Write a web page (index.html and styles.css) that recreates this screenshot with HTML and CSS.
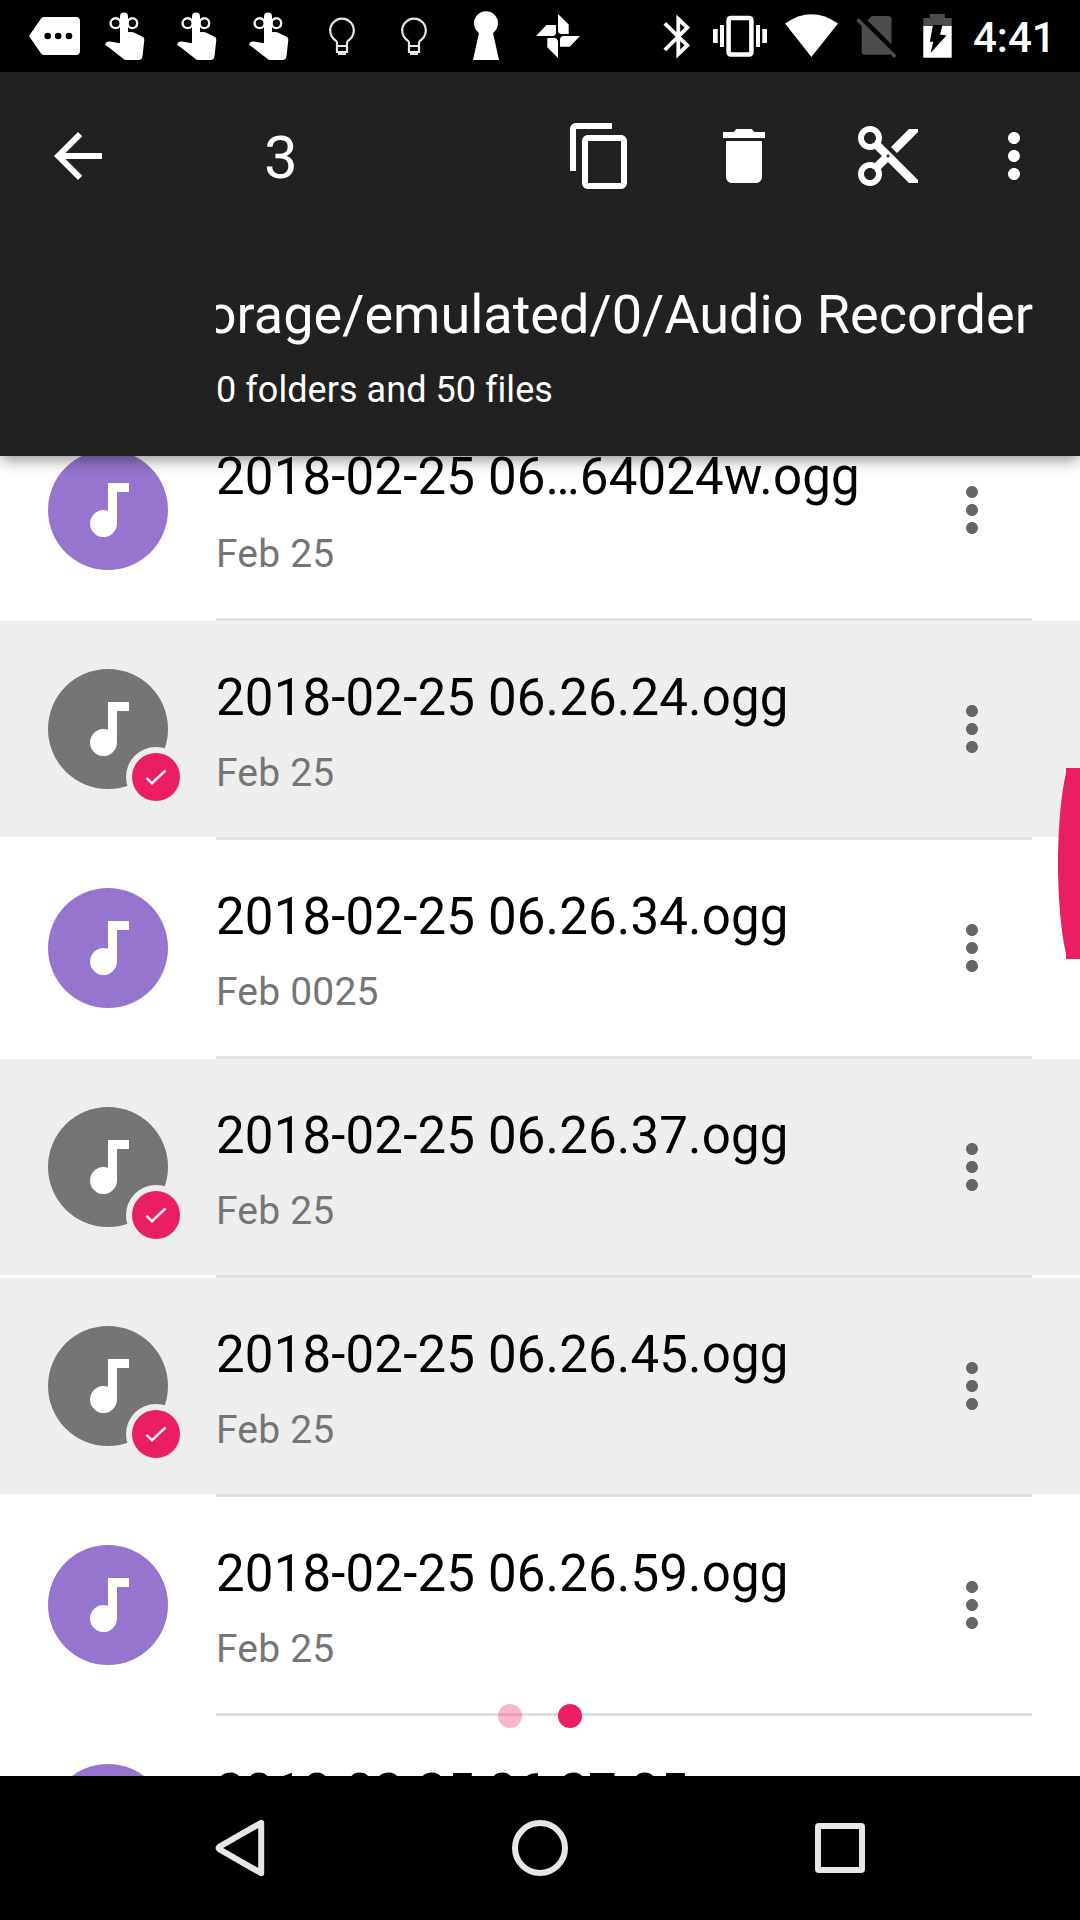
FILE: index.html
```html
<!DOCTYPE html>
<html lang="en">
<head>
<meta charset="utf-8">
<title>Audio Recorder</title>
<link rel="stylesheet" href="styles.css">
</head>
<body>
<svg class="defs" width="0" height="0">
  <symbol id="reminder" viewBox="90 0 72 72">
    <g fill="none" stroke="#fff" stroke-width="2.4"><ellipse cx="115.6" cy="23.2" rx="5" ry="4.9"/><ellipse cx="132.4" cy="23.2" rx="4.8" ry="4.9"/></g>
    <path fill="#fff" d="M120 16.5a4 4 0 0 1 8 0V32h3q2 0 4 1l8 4q1.400 1 1.300 3l-1.800 16q-.5 4-4 4h-12q-2 0-3.500-1.500L105 44.500q1-3.500 5-3l10 1.700z"/>
  </symbol>
  <symbol id="bulb" viewBox="306 0 72 72">
    <path fill="none" stroke="#e4e8e6" stroke-width="2.200" d="M337 52V43q0-2-2-3a11.800 11.800 0 1 1 14 0q-2 1-2 3v9zM337 46h10"/>
    <path fill="#e4e8e6" d="M338 51h8v4h-8z"/>
  </symbol>
  <symbol id="dots" viewBox="0 0 24 24"><path fill="currentColor" d="M12 8c1.100 0 2-.9 2-2s-.9-2-2-2-2 .9-2 2 .9 2 2 2zm0 2c-1.100 0-2 .9-2 2s.9 2 2 2 2-.9 2-2-.9-2-2-2zm0 6c-1.100 0-2 .9-2 2s.9 2 2 2 2-.9 2-2-.9-2-2-2z"/></symbol>
  <symbol id="note" viewBox="0 0 120 120"><path fill="#fff" d="M60 33h21v9H69v31.500A13.500 13.500 0 1 1 60 60.800z"/></symbol>
  <symbol id="check" viewBox="-24 -24 48 48"><path fill="none" stroke="#fff" stroke-opacity=".92" stroke-width="2.500" d="M-9.500 .8L-4 6.200L9.600-6.700"/></symbol>
</svg>

<div class="screen">
  <div class="status">
    <div class="notifications">
      <svg width="72" height="72" viewBox="18 0 72 72"><path fill="#fff" d="M44 17H76a4 4 0 0 1 4 4V51a4 4 0 0 1-4 4H44q-2 0-3.300-2L29 36L40.700 19q1.300-2 3.300-2z"/><g fill="#000"><circle cx="47.700" cy="36" r="3.300"/><circle cx="58.200" cy="36" r="3.300"/><circle cx="69" cy="36" r="3.300"/></g></svg>
      <svg width="72" height="72"><use href="#reminder"/></svg>
      <svg width="72" height="72"><use href="#reminder"/></svg>
      <svg width="72" height="72"><use href="#reminder"/></svg>
      <svg width="72" height="72"><use href="#bulb"/></svg>
      <svg width="72" height="72"><use href="#bulb"/></svg>
      <svg width="72" height="72" viewBox="450 0 72 72"><path fill="#fff" d="M479 33a12 12 0 1 1 14 0L499 60H473z"/></svg>
      <svg width="72" height="72" viewBox="522 0 72 72"><path fill="#fff" d="M558 14l10.700 10.500V34H561q-3-.5-3-3.500zM536 36l10.500-11H556v8q-.5 3-3.500 3zM580 36l-10.300 10.700H560V39q.5-3 3.500-3zM558 58l-10.700-10.700V38h7.400q3 .5 3.300 3.500z"/></svg>
    </div>
    <div class="system">
      <svg width="40" height="72" viewBox="660 0 40 72"><path fill="none" stroke="#fff" stroke-width="3.800" d="M664.800 23.300L687.300 45.500L678.300 54V19L687.300 27.500L664.800 50"/></svg>
      <svg width="80" height="72" viewBox="700 0 80 72"><rect x="728.600" y="18" width="22.800" height="36.500" rx="2" fill="none" stroke="#fff" stroke-width="4.500"/><path fill="#fff" d="M720 25h4v22h-4zM713 29h4.700v14H713zM756 25h4v22h-4zM762.300 29h4.700v14h-4.700z"/></svg>
      <svg width="64" height="72" viewBox="780 0 64 72"><path fill="#fff" d="M785 23.500Q811.500 5 838 23.500L811.400 57z"/></svg>
      <svg width="64" height="72" viewBox="844 0 64 72"><path fill="#4d4d4d" d="M872 16H888a3.500 3.500 0 0 1 3.500 3.500V51.200a3.500 3.500 0 0 1-3.500 3.500H865.200a3.500 3.500 0 0 1-3.500-3.500V26z"/><path stroke="#000" stroke-width="5" d="M859 15.500L900 56.300"/><path stroke="#4d4d4d" stroke-width="3.300" d="M857.500 19.500L895.300 56.700"/></svg>
      <svg width="60" height="72" viewBox="908 0 60 72"><path fill="#4d4d4d" d="M930 14h14.700v4h7v8h-28.400v-8H930z"/><path fill="#fff" d="M923.300 26h28.400v31.700h-28.400z"/><path fill="#000" d="M933 25h9.500l-2.500 9.500l6.500 1L930.500 53l2.800-11.300h-3.500z"/></svg>
      <span class="clock">4:41</span>
    </div>
  </div>

  <header class="appbar">
    <div class="toolbar">
      <svg width="72" height="72" viewBox="0 0 24 24"><path fill="#fff" d="M20 11H7.830l5.590-5.590L12 4l-8 8 8 8 1.410-1.410L7.830 13H20v-2z"/></svg>
      <span class="count">3</span>
      <div class="actions">
        <svg width="72" height="72" viewBox="0 0 24 24"><path fill="#fff" d="M16 1H4c-1.100 0-2 .9-2 2v14h2V3h12V1zm3 4H8c-1.100 0-2 .9-2 2v14c0 1.100.9 2 2 2h11c1.100 0 2-.9 2-2V7c0-1.100-.9-2-2-2zm0 16H8V7h11v14z"/></svg>
        <svg width="72" height="72" viewBox="0 0 24 24"><path fill="#fff" d="M6 19c0 1.100.9 2 2 2h8c1.100 0 2-.9 2-2V7H6v12zM19 4h-3.500l-1-1h-5l-1 1H5v2h14V4z"/></svg>
        <svg width="72" height="72" viewBox="0 0 24 24"><path fill="#fff" d="M9.640 7.640c.23-.5.360-1.050.360-1.640 0-2.210-1.790-4-4-4S2 3.790 2 6s1.790 4 4 4c.59 0 1.140-.13 1.640-.36L10 12l-2.360 2.360C7.140 14.130 6.590 14 6 14c-2.210 0-4 1.790-4 4s1.790 4 4 4 4-1.790 4-4c0-.59-.13-1.140-.36-1.640L12 14l7 7h3v-1L9.640 7.640zM6 8c-1.100 0-2-.89-2-2s.9-2 2-2 2 .89 2 2-.9 2-2 2zm0 12c-1.100 0-2-.89-2-2s.9-2 2-2 2 .89 2 2-.9 2-2 2zm6-7.500c-.28 0-.5-.22-.5-.5s.22-.5.500-.5.500.22.500.5-.22.500-.5.500zM19 3l-6 6 2 2 7-7V3h-3z"/></svg>
      </div>
      <svg class="overflow" width="72" height="72"><use href="#dots"/></svg>
    </div>
    <div class="path"><span>/storage/emulated/0/Audio Recorder</span></div>
    <div class="summary">0 folders and 50 files</div>
  </header>

  <main class="list">
    <div class="row clipped">
      <div class="avatar"><svg width="120" height="120"><use href="#note"/></svg></div>
      <div class="info"><div class="name">2018-02-25 06…64024w.ogg</div><div class="date">Feb 25</div></div>
      <svg class="menu" width="72" height="72"><use href="#dots"/></svg>
    </div>
    <div class="row selected">
      <div class="avatar"><svg width="120" height="120"><use href="#note"/></svg><svg class="badge" width="48" height="48"><use href="#check"/></svg></div>
      <div class="info"><div class="name">2018-02-25 06.26.24.ogg</div><div class="date">Feb 25</div></div>
      <svg class="menu" width="72" height="72"><use href="#dots"/></svg>
    </div>
    <div class="row">
      <div class="avatar"><svg width="120" height="120"><use href="#note"/></svg></div>
      <div class="info"><div class="name">2018-02-25 06.26.34.ogg</div><div class="date">Feb 0025</div></div>
      <svg class="menu" width="72" height="72"><use href="#dots"/></svg>
    </div>
    <div class="row selected">
      <div class="avatar"><svg width="120" height="120"><use href="#note"/></svg><svg class="badge" width="48" height="48"><use href="#check"/></svg></div>
      <div class="info"><div class="name">2018-02-25 06.26.37.ogg</div><div class="date">Feb 25</div></div>
      <svg class="menu" width="72" height="72"><use href="#dots"/></svg>
    </div>
    <div class="row selected">
      <div class="avatar"><svg width="120" height="120"><use href="#note"/></svg><svg class="badge" width="48" height="48"><use href="#check"/></svg></div>
      <div class="info"><div class="name">2018-02-25 06.26.45.ogg</div><div class="date">Feb 25</div></div>
      <svg class="menu" width="72" height="72"><use href="#dots"/></svg>
    </div>
    <div class="row">
      <div class="avatar"><svg width="120" height="120"><use href="#note"/></svg></div>
      <div class="info"><div class="name">2018-02-25 06.26.59.ogg</div><div class="date">Feb 25</div></div>
      <svg class="menu" width="72" height="72"><use href="#dots"/></svg>
    </div>
    <div class="row">
      <div class="avatar"></div>
      <div class="info"><div class="name">2018-02-25 06.27.05.ogg</div></div>
    </div>
    <svg class="scroller" width="22" height="191" viewBox="0 0 22 191"><path fill="#e91e63" d="M22 0H8V5A22 117 0 0 0 8 186V191H22z"/></svg>
    <div class="pager"><i></i><i class="current"></i></div>
  </main>

  <nav class="navbar">
    <svg width="300" height="144" viewBox="90 1776 300 144"><path d="M261.200 1822.800V1873.200L219.500 1849.300Q217.500 1848 219.500 1846.700z"/></svg>
    <svg width="300" height="144" viewBox="390 1776 300 144"><circle cx="540" cy="1848" r="25"/></svg>
    <svg width="300" height="144" viewBox="690 1776 300 144"><rect x="818" y="1826" width="44" height="44" rx="1"/></svg>
  </nav>
</div>
</body>
</html>
```
FILE: styles.css
```css
* { box-sizing: border-box; }
body { margin: 0; font-family: Roboto, sans-serif; background: #000; }
svg { display: block; flex: none; }
.defs { position: absolute; }
.screen { width: 1080px; height: 1920px; display: flex; flex-direction: column; overflow: hidden; }

.status { height: 72px; flex: none; background: #000; display: flex; justify-content: space-between; padding-left: 18px; }
.notifications { display: flex; }
.system { display: flex; width: 420px; }
.clock { color: #fff; font-size: 42px; font-weight: 500; line-height: 75px; padding-left: 5px; }

.appbar { height: 384px; flex: none; background: #212121; color: #fff; position: relative; z-index: 2; box-shadow: 0 5px 14px -1px rgba(0, 0, 0, .42); }
.toolbar { height: 168px; display: flex; align-items: center; padding: 0 30px 0 42px; }
.count { font-size: 60px; line-height: 70px; padding: 4px 0 0 150px; flex: 1; }
.actions { display: flex; gap: 72px; }
.overflow { margin-left: 54px; }
.path { margin: 39px 47px 0 216px; height: 72px; overflow: hidden; display: flex; justify-content: flex-end; font-size: 54px; line-height: 72px; white-space: nowrap; }
.summary { margin: 18px 0 0 216px; font-size: 36px; line-height: 42px; letter-spacing: .05px; }

.list { flex: none; height: 1320px; background: #fff; position: relative; overflow: hidden; }
.row { height: 219px; display: flex; padding: 0 72px 0 48px; background: linear-gradient(#e0e0e0, #e0e0e0) 216px 216px / 816px 3px no-repeat; }
.row.clipped { margin-top: -54px; }
.row.selected { background: linear-gradient(#e0e0e0, #e0e0e0) 216px 216px / 816px 3px no-repeat, linear-gradient(#eee, #eee) 0 0 / 100% 216px no-repeat; }
.avatar { width: 120px; height: 120px; flex: none; margin-top: 48px; border-radius: 50%; background: #9575cd; position: relative; }
.selected .avatar { background: #757575; }
.badge { position: absolute; left: 84px; top: 84px; border-radius: 50%; background: #e91e63; box-shadow: 0 0 0 6px #eee; }
.info { flex: 1; padding: 45px 0 0 48px; }
.clipped .info { padding-top: 43px; }
.name { font-size: 51px; line-height: 64px; letter-spacing: .16px; color: #000; white-space: nowrap; }
.date { font-size: 39px; line-height: 48px; margin-top: 19px; letter-spacing: .2px; color: #757575; }
.clipped .date { margin-top: 21px; }
.menu { margin-top: 72px; color: #666; }
.scroller { position: absolute; right: 0; top: 312px; }
.pager { position: absolute; left: 498px; top: 1248px; display: flex; gap: 36px; }
.pager i { width: 24px; height: 24px; border-radius: 50%; background: #e91e63; opacity: .32; }
.pager .current { opacity: 1; }

.navbar { height: 144px; flex: none; background: #000; display: flex; justify-content: center; }
.navbar svg { fill: none; stroke: #e6e6e6; stroke-width: 6; stroke-linejoin: round; }
```
